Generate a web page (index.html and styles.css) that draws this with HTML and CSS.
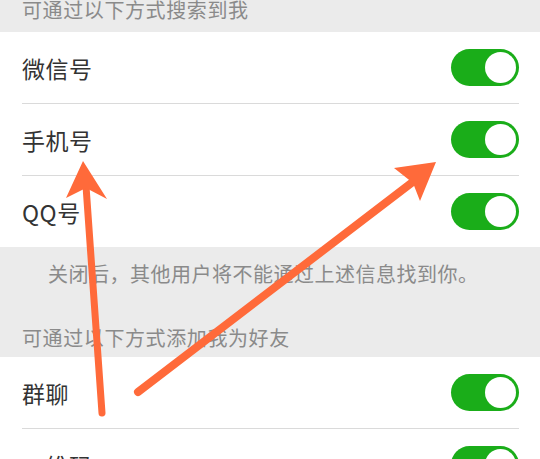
FILE: index.html
```html
<!DOCTYPE html>
<html lang="zh">
<head>
<meta charset="utf-8">
<link rel="stylesheet" href="styles.css">
</head>
<body>
<div class="page">
  <div class="group-title top">可通过以下方式搜索到我</div>
  <div class="section">
    <div class="row"><div class="row-inner"><span class="label">微信号</span><span class="toggle"><span class="knob"></span></span></div></div>
    <div class="row"><div class="row-inner"><span class="label">手机号</span><span class="toggle"><span class="knob"></span></span></div></div>
    <div class="row"><div class="row-inner last"><span class="label">QQ号</span><span class="toggle"><span class="knob"></span></span></div></div>
  </div>
  <div class="gray-block">
    <div class="note">关闭后，其他用户将不能通过上述信息找到你。</div>
    <div class="group-title second">可通过以下方式添加我为好友</div>
  </div>
  <div class="section">
    <div class="row"><div class="row-inner"><span class="label">群聊</span><span class="toggle"><span class="knob"></span></span></div></div>
    <div class="row"><div class="row-inner last"><span class="label">二维码</span><span class="toggle"><span class="knob"></span></span></div></div>
  </div>
  <svg class="arrows" width="540" height="459" viewBox="0 0 540 459">
    <g fill="#ff6a3a" stroke="none">
      <line x1="102" y1="413" x2="86" y2="186" stroke="#ff6a3a" stroke-width="7" stroke-linecap="round"/>
      <polygon points="83,161 107,199 86,188 66,198"/>
      <line x1="138" y1="392" x2="414" y2="181" stroke="#ff6a3a" stroke-width="8" stroke-linecap="round"/>
      <polygon points="436,162 420,201 413,183 394,168"/>
    </g>
  </svg>
</div>
</body>
</html>
```
FILE: styles.css
```css
html, body {
  margin: 0;
  padding: 0;
}
body {
  background: #ebebeb;
  font-family: "Noto Sans CJK SC", "Noto Sans", sans-serif;
  overflow: hidden;
}
.page {
  position: relative;
  width: 540px;
  height: 459px;
  overflow: hidden;
}
.group-title {
  color: #8a8a8a;
  font-size: 20px;
  letter-spacing: 0.6px;
  line-height: 26px;
  padding-left: 22px;
}
.group-title.top {
  height: 32px;
  line-height: 20px;
}
.section {
  background: #ffffff;
}
.row {
  padding: 0 21px 0 22px;
}
.row-inner {
  height: 71px;
  border-bottom: 1px solid #dadada;
  display: flex;
  align-items: center;
  justify-content: space-between;
}
.row-inner.last {
  border-bottom: none;
}
.label {
  font-size: 23px;
  color: #333333;
  letter-spacing: 0.5px;
}
.toggle {
  position: relative;
  display: block;
  width: 68px;
  height: 37px;
  border-radius: 19px;
  background: #1aad19;
}
.knob {
  position: absolute;
  right: 3px;
  top: 3px;
  width: 31px;
  height: 31px;
  border-radius: 50%;
  background: #ffffff;
}
.gray-block {
  padding-bottom: 6px;
}
.note {
  color: #8a8a8a;
  font-size: 20px;
  letter-spacing: 0.5px;
  line-height: 26px;
  padding: 14px 0 0 48px;
}
.group-title.second {
  margin-top: 38px;
}
.arrows {
  position: absolute;
  left: 0;
  top: 0;
  pointer-events: none;
}
```
